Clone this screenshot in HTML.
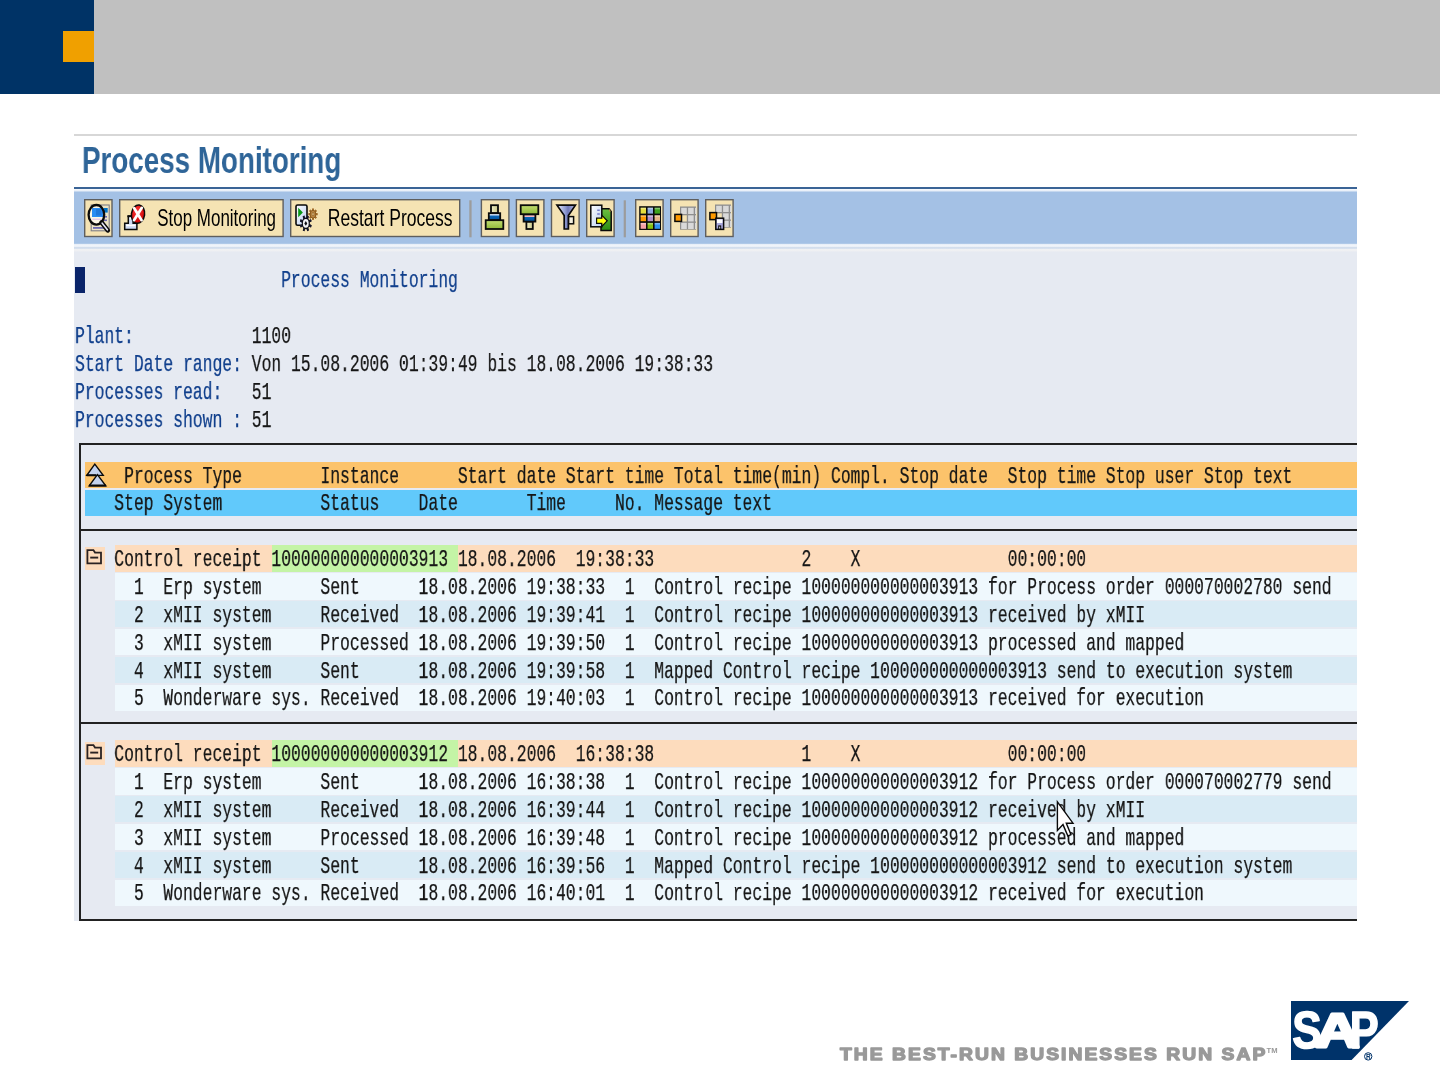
<!DOCTYPE html>
<html><head><meta charset="utf-8"><title>Process Monitoring</title>
<style>
html,body{margin:0;padding:0;background:#fff;}
body{width:1440px;height:1065px;position:relative;overflow:hidden;font-family:"Liberation Sans",sans-serif;}
.abs{position:absolute;}
.ln{position:absolute;left:75.20px;height:28px;line-height:28px;font-family:"Liberation Mono",monospace;font-size:24px;white-space:pre;color:#161616;transform-origin:0 0;transform:scaleX(0.68163);-webkit-text-stroke:0.25px currentColor;will-change:transform;}
.ln .b{color:#103f8c;}
.bg{position:absolute;height:26.3px;}
</style></head><body>

<div class="abs" style="left:94px;top:0;width:1346px;height:94px;background:#c0c0c0"></div>
<div class="abs" style="left:0;top:0;width:94px;height:94px;background:#003366"></div>
<div class="abs" style="left:63px;top:31px;width:31px;height:31px;background:#f0a000"></div>
<div class="abs" id="clip" style="left:0;top:0;width:1357px;height:1065px;overflow:hidden">
<div class="abs" style="left:74px;top:134px;width:1300px;height:126px;background:linear-gradient(to bottom,#ffffff 0.0px,#ffffff 0.1px,#d7d7d7 0.3px,#d7d7d7 1.5px,#ffffff 1.8px,#ffffff 53.0px,#3a6496 53.3px,#3a6496 54.9px,#f6f9fd 55.3px,#eef3fa 56.4px,#a4c1e5 58.4px,#a4c1e5 109.3px,#eef3fa 110.6px,#f2f5fa 112.4px,#d3deed 112.9px,#d3deed 114.4px,#f0f1f3 114.9px,#eff0f3 116.8px,#e6eaf2 118.0px,#e6eaf2 126.0px)"></div>
<div class="abs" style="left:74px;top:259px;width:1300px;height:662.2px;background:#e6eaf2"></div>
<div class="abs" id="title" style="left:81.5px;top:140.9px;font:bold 36.5px/40px 'Liberation Sans',sans-serif;color:#2f6598;white-space:pre;transform-origin:0 0;transform:scaleX(0.761);will-change:transform">Process Monitoring</div>
<svg class="abs" style="left:0;top:0;will-change:transform" width="1440" height="1065" viewBox="0 0 1440 1065">
<defs>
<linearGradient id="gGreen" x1="0" y1="0" x2="0" y2="1"><stop offset="0" stop-color="#c2dc72"/><stop offset="1" stop-color="#8fb838"/></linearGradient>
<linearGradient id="gCream" x1="0" y1="0" x2="1" y2="0"><stop offset="0" stop-color="#f2f0c8"/><stop offset="1" stop-color="#c9c68a"/></linearGradient>
<linearGradient id="gBlue" x1="0" y1="0" x2="0" y2="1"><stop offset="0" stop-color="#e8f0fc"/><stop offset="0.3" stop-color="#cfe0f8"/><stop offset="0.36" stop-color="#0a66b8"/><stop offset="1" stop-color="#00509c"/></linearGradient>
<linearGradient id="gBlueP" x1="0" y1="0" x2="0" y2="1"><stop offset="0" stop-color="#fcc4cc"/><stop offset="0.3" stop-color="#f8b8c0"/><stop offset="0.36" stop-color="#0a66b8"/><stop offset="1" stop-color="#00509c"/></linearGradient>
<linearGradient id="gFun" x1="0" y1="0" x2="1" y2="0"><stop offset="0" stop-color="#e8ecfa"/><stop offset="0.45" stop-color="#8f9bd2"/><stop offset="0.6" stop-color="#6f78b8"/><stop offset="1" stop-color="#b8c0e6"/></linearGradient>
<linearGradient id="gDoc" x1="0" y1="0" x2="1" y2="1"><stop offset="0" stop-color="#ffffff"/><stop offset="1" stop-color="#b9cdf0"/></linearGradient>
<linearGradient id="gGrn2" x1="0" y1="0" x2="0" y2="1"><stop offset="0" stop-color="#6cc040"/><stop offset="1" stop-color="#2a8a12"/></linearGradient>
<radialGradient id="gRed" cx="0.4" cy="0.35" r="0.7"><stop offset="0" stop-color="#ff3a3a"/><stop offset="1" stop-color="#c80000"/></radialGradient>
</defs>
<rect x="84.70" y="199.7" width="27.30" height="36.8" fill="#f5e3b3" stroke="#5e5e5e" stroke-width="1.4"/>
<rect x="119.70" y="199.7" width="163.40" height="36.8" fill="#f5e3b3" stroke="#5e5e5e" stroke-width="1.4"/>
<rect x="290.70" y="199.7" width="169.00" height="36.8" fill="#f5e3b3" stroke="#5e5e5e" stroke-width="1.4"/>
<rect x="481.40" y="199.7" width="27.50" height="36.8" fill="#f5e3b3" stroke="#5e5e5e" stroke-width="1.4"/>
<rect x="516.40" y="199.7" width="27.50" height="36.8" fill="#f5e3b3" stroke="#5e5e5e" stroke-width="1.4"/>
<rect x="551.50" y="199.7" width="27.60" height="36.8" fill="#f5e3b3" stroke="#5e5e5e" stroke-width="1.4"/>
<rect x="586.70" y="199.7" width="27.40" height="36.8" fill="#f5e3b3" stroke="#5e5e5e" stroke-width="1.4"/>
<rect x="635.70" y="199.7" width="27.40" height="36.8" fill="#f5e3b3" stroke="#5e5e5e" stroke-width="1.4"/>
<rect x="670.70" y="199.7" width="27.40" height="36.8" fill="#f5e3b3" stroke="#5e5e5e" stroke-width="1.4"/>
<rect x="705.70" y="199.7" width="27.40" height="36.8" fill="#f5e3b3" stroke="#5e5e5e" stroke-width="1.4"/>
<rect x="469.3" y="200.3" width="2.3" height="37" fill="#9c9c9c"/>
<rect x="623.7" y="200.3" width="2.2" height="37" fill="#9c9c9c"/>
<text x="157.3" y="226" font-family="Liberation Sans, sans-serif" font-size="23.6" textLength="118.7" lengthAdjust="spacingAndGlyphs" fill="#000">Stop Monitoring</text>
<text x="327.8" y="226" font-family="Liberation Sans, sans-serif" font-size="23.6" textLength="124.8" lengthAdjust="spacingAndGlyphs" fill="#000">Restart Process</text>
<g>
<rect x="91.2" y="205" width="18" height="25.8" fill="#ece4c6" stroke="#7e7e86" stroke-width="1.1"/>
<rect x="103.3" y="208" width="4.4" height="4.6" fill="#0070c4"/>
<rect x="103.8" y="216" width="3.2" height="1.6" fill="#6a68b0"/><rect x="103.8" y="219.5" width="3.2" height="1.6" fill="#6a68b0"/>
<rect x="93" y="227" width="12" height="1.8" fill="#6a68b0"/>
<ellipse cx="96.4" cy="214.8" rx="7.9" ry="9.9" fill="#fbf6e6"/>
<rect x="92" y="208" width="11.2" height="9" fill="#2a8cf2"/>
<rect x="96" y="209" width="5.5" height="6.5" fill="#1c6fd0" opacity="0.7"/>
<rect x="92.5" y="218.6" width="9" height="1.3" fill="#e6c6e6"/>
<ellipse cx="96.4" cy="214.8" rx="7.8" ry="9.8" fill="none" stroke="#0a0a0a" stroke-width="2.3"/>
<path d="M101.6 222.4 L107.8 230.4" stroke="#0a0a0a" stroke-width="4.6" stroke-linecap="round"/>
<path d="M102.2 223.2 L107.4 229.8" stroke="#e8e8fa" stroke-width="1.6" stroke-linecap="round"/>
</g>
<g>
<path d="M128.3 216 h4.8 v7.2 h3.8 v6.2 h-12.2 v-6.2 h3.6 z" fill="#cdd9f3" stroke="#0a0a0a" stroke-width="1.5" stroke-linejoin="miter"/>
<rect x="126.2" y="224.6" width="9.2" height="1.6" fill="#ffffff"/>
<rect x="127.4" y="215.4" width="6.6" height="1.8" fill="#0a0a0a"/>
<circle cx="130.6" cy="218.4" r="1.1" fill="#ffffff"/>
<ellipse cx="138" cy="214.2" rx="6.6" ry="9.2" fill="url(#gRed)" stroke="#0a0a0a" stroke-width="1.5" transform="rotate(8 138 214.2)"/>
<path d="M134.2 208.2 L141.6 220.2 M141.8 207.8 L134 220.2" stroke="#fff" stroke-width="2.7" stroke-linecap="round"/>
</g>
<g>
<rect x="296" y="205" width="11" height="20.3" rx="1.6" fill="url(#gDoc)" stroke="#0a0a0a" stroke-width="1.6"/>
<path d="M298.2 207.8 L302.9 212.4 L298.2 217.2 z" fill="#0a9a18"/>
<g transform="translate(313 214.2) scale(0.8 1)">
<rect x="-1" y="-5.6" width="2" height="11.2" fill="#a06a28" transform="rotate(0)"/>
<rect x="-1" y="-5.6" width="2" height="11.2" fill="#a06a28" transform="rotate(45)"/>
<rect x="-1" y="-5.6" width="2" height="11.2" fill="#a06a28" transform="rotate(90)"/>
<rect x="-1" y="-5.6" width="2" height="11.2" fill="#a06a28" transform="rotate(135)"/>
<rect x="-1" y="-5.6" width="2" height="11.2" fill="#a06a28" transform="rotate(180)"/>
<rect x="-1" y="-5.6" width="2" height="11.2" fill="#a06a28" transform="rotate(225)"/>
<rect x="-1" y="-5.6" width="2" height="11.2" fill="#a06a28" transform="rotate(270)"/>
<rect x="-1" y="-5.6" width="2" height="11.2" fill="#a06a28" transform="rotate(315)"/>
<ellipse cx="0" cy="0" rx="3.5" ry="4" fill="#b98542" stroke="#7a4c14" stroke-width="0.8"/><rect x="-1.1" y="-1.3" width="2.2" height="2.6" fill="#e9cf9a" stroke="#7a4c14" stroke-width="0.5"/>
</g>
<g transform="translate(305.8 223.4) scale(0.74 1)">
<rect x="-1.15" y="-8" width="2.3" height="16" fill="#16162a" transform="rotate(22)"/>
<rect x="-1.15" y="-8" width="2.3" height="16" fill="#16162a" transform="rotate(67)"/>
<rect x="-1.15" y="-8" width="2.3" height="16" fill="#16162a" transform="rotate(112)"/>
<rect x="-1.15" y="-8" width="2.3" height="16" fill="#16162a" transform="rotate(157)"/>
<rect x="-1.15" y="-8" width="2.3" height="16" fill="#16162a" transform="rotate(202)"/>
<rect x="-1.15" y="-8" width="2.3" height="16" fill="#16162a" transform="rotate(247)"/>
<rect x="-1.15" y="-8" width="2.3" height="16" fill="#16162a" transform="rotate(292)"/>
<rect x="-1.15" y="-8" width="2.3" height="16" fill="#16162a" transform="rotate(337)"/>
<ellipse cx="0" cy="0" rx="5.4" ry="5.9" fill="#101018"/>
<ellipse cx="0" cy="0" rx="3.9" ry="4.4" fill="#f2f2f6"/>
<path d="M0 -2.4 L2 0 L0 2.4 L-2 0 z" fill="#101018"/>
</g>
</g>
<g stroke="#0a0a0a" stroke-width="1.8">
<rect x="491" y="205.2" width="7" height="8" fill="url(#gCream)"/>
<rect x="488.8" y="213.2" width="11.4" height="7" fill="url(#gBlue)"/>
<rect x="485.7" y="220.2" width="17.6" height="8.8" fill="url(#gGreen)"/>
</g>
<g stroke="#0a0a0a" stroke-width="1.8">
<rect x="526.4" y="221.6" width="6.4" height="7.4" fill="url(#gCream)"/>
<rect x="523.6" y="214.4" width="11.8" height="7.2" fill="url(#gBlueP)"/>
<rect x="520.7" y="205.2" width="17.6" height="9" fill="url(#gGreen)"/>
</g>
<g>
<rect x="568.4" y="216.6" width="5.2" height="7.2" fill="#f4f0e0" stroke="#0a0a0a" stroke-width="1.5"/>
<path d="M557 205.2 L575.4 205.2 L568.4 215.6 L568.4 229 L564.2 229 L564.2 215.6 z" fill="url(#gFun)" stroke="#0a0a0a" stroke-width="1.7" stroke-linejoin="miter"/>
</g>
<g>
<path d="M601 208.8 L609 208.8 L611.2 211.4 L611.2 230.6 L601 230.6 z" fill="url(#gGrn2)" stroke="#0a0a0a" stroke-width="1.5"/>
<path d="M609 208.8 L611.2 211.4 L609 211.4 z" fill="#b89040"/>
<rect x="590.8" y="205.2" width="11" height="21.6" fill="url(#gDoc)" stroke="#0a0a0a" stroke-width="1.5"/>
<rect x="597.2" y="209.6" width="2.6" height="1.2" fill="#5a62c0"/><rect x="597.2" y="213.4" width="2.6" height="1.2" fill="#5a62c0"/>
<path d="M596.6 218.2 L601.8 218.2 L601.8 215.2 L607.2 220.8 L601.8 226.4 L601.8 223.4 L596.6 223.4 z" fill="#ffff10" stroke="#0a0a0a" stroke-width="1.2" stroke-linejoin="miter"/>
</g>
<g>
<rect x="639.2" y="206.2" width="21.8" height="23.8" fill="#0a0a0a"/>
<rect x="640.60" y="207.70" width="5.4" height="5.9" fill="#e6de3c"/>
<rect x="640.60" y="207.70" width="5.4" height="1.6" fill="#fff" opacity="0.35"/>
<rect x="647.60" y="207.70" width="5.4" height="5.9" fill="#8aa8dc"/>
<rect x="647.60" y="207.70" width="5.4" height="1.6" fill="#fff" opacity="0.35"/>
<rect x="654.60" y="207.70" width="5.4" height="5.9" fill="#3ea21e"/>
<rect x="654.60" y="207.70" width="5.4" height="1.6" fill="#fff" opacity="0.35"/>
<rect x="640.60" y="215.30" width="5.4" height="5.9" fill="#ff9a00"/>
<rect x="640.60" y="215.30" width="5.4" height="1.6" fill="#fff" opacity="0.35"/>
<rect x="647.60" y="215.30" width="5.4" height="5.9" fill="#b08fc8"/>
<rect x="647.60" y="215.30" width="5.4" height="1.6" fill="#fff" opacity="0.35"/>
<rect x="654.60" y="215.30" width="5.4" height="5.9" fill="#e6b688"/>
<rect x="654.60" y="215.30" width="5.4" height="1.6" fill="#fff" opacity="0.35"/>
<rect x="640.60" y="222.90" width="5.4" height="5.9" fill="#f7a0a4"/>
<rect x="640.60" y="222.90" width="5.4" height="1.6" fill="#fff" opacity="0.35"/>
<rect x="647.60" y="222.90" width="5.4" height="5.9" fill="#86c010"/>
<rect x="647.60" y="222.90" width="5.4" height="1.6" fill="#fff" opacity="0.35"/>
<rect x="654.60" y="222.90" width="5.4" height="5.9" fill="#2e90f2"/>
<rect x="654.60" y="222.90" width="5.4" height="1.6" fill="#fff" opacity="0.35"/>
</g>
<rect x="680.00" y="206.50" width="16" height="23.2" fill="#8e8e8e"/>
<rect x="681.20" y="207.80" width="5.60" height="6.2" fill="#d9d9d9"/>
<rect x="688.10" y="207.80" width="5.60" height="6.2" fill="#d9d9d9"/>
<rect x="695.00" y="207.80" width="1.60" height="6.2" fill="#d9d9d9"/>
<rect x="681.20" y="215.30" width="5.60" height="6.2" fill="#f5e3b3"/>
<rect x="688.10" y="215.30" width="5.60" height="6.2" fill="#d9d9d9"/>
<rect x="695.00" y="215.30" width="1.60" height="6.2" fill="#d9d9d9"/>
<rect x="681.20" y="222.80" width="5.60" height="6.2" fill="#d9d9d9"/>
<rect x="688.10" y="222.80" width="5.60" height="6.2" fill="#d9d9d9"/>
<rect x="695.00" y="222.80" width="1.60" height="6.2" fill="#d9d9d9"/>
<rect x="680" y="214.6" width="1.4" height="6.6" fill="#f5e3b3"/>
<rect x="674.9" y="214.4" width="6.6" height="7" fill="#ff9a00" stroke="#0a0a0a" stroke-width="1.5"/>
<rect x="715.00" y="204.50" width="16" height="23.2" fill="#8e8e8e"/>
<rect x="716.20" y="205.80" width="5.60" height="6.2" fill="#d9d9d9"/>
<rect x="723.10" y="205.80" width="5.60" height="6.2" fill="#d9d9d9"/>
<rect x="730.00" y="205.80" width="1.60" height="6.2" fill="#d9d9d9"/>
<rect x="716.20" y="213.30" width="5.60" height="6.2" fill="#f5e3b3"/>
<rect x="723.10" y="213.30" width="5.60" height="6.2" fill="#d9d9d9"/>
<rect x="730.00" y="213.30" width="1.60" height="6.2" fill="#d9d9d9"/>
<rect x="716.20" y="220.80" width="5.60" height="6.2" fill="#d9d9d9"/>
<rect x="723.10" y="220.80" width="5.60" height="6.2" fill="#d9d9d9"/>
<rect x="730.00" y="220.80" width="1.60" height="6.2" fill="#d9d9d9"/>
<rect x="709.9" y="212.6" width="6.6" height="7" fill="#ff9a00" stroke="#0a0a0a" stroke-width="1.5"/>
<rect x="715.8" y="218.2" width="7.8" height="11.2" fill="#aaa8dc" stroke="#0a0a0a" stroke-width="1.5"/>
<rect x="717" y="219.4" width="5.4" height="3.6" fill="#ffffff"/>
<rect x="718.2" y="225.4" width="3" height="3.6" fill="#0a0a0a"/><rect x="719.3" y="226.6" width="0.9" height="2" fill="#fff"/>
</svg>
<div class="abs" style="left:75px;top:267px;width:10px;height:25.5px;background:#0a246a"></div>
<div class="abs" style="left:79px;top:443px;width:1300px;height:473.9px;border:2px solid #222;border-bottom-width:2.3px;border-right:none"></div>
<div class="abs" style="left:79px;top:528.5px;width:1300px;height:2px;background:#222"></div>
<div class="abs" style="left:79px;top:721.5px;width:1300px;height:2px;background:#222"></div>
<div class="ln" style="top:267.48px"><span class="b">                     Process Monitoring</span></div>
<div class="ln" style="top:323.20px"><span class="b">Plant:</span>            1100</div>
<div class="ln" style="top:351.06px"><span class="b">Start Date range:</span> Von 15.08.2006 01:39:49 bis 18.08.2006 19:38:33</div>
<div class="ln" style="top:378.92px"><span class="b">Processes read:</span>   51</div>
<div class="ln" style="top:406.78px"><span class="b">Processes shown :</span> 51</div>
<div class="bg" style="left:85.0px;top:461.80px;width:1400.0px;background:#fcc36b"></div>
<div class="bg" style="left:85.0px;top:489.66px;width:1400.0px;background:#61c9fb"></div>
<div class="ln" style="top:462.50px">     Process Type        Instance      Start date Start time Total time(min) Compl. Stop date  Stop time Stop user Stop text</div>
<div class="ln" style="top:490.36px">    Step System          Status    Date       Time     No. Message text</div>
<div class="abs" style="left:85.0px;top:546.98px;width:19.6px;height:22.6px;background:#fddcbd"></div>
<div class="bg" style="left:114.5px;top:545.38px;width:1400.0px;background:#fddcbd"></div>
<div class="bg" style="left:271.5px;top:545.38px;width:186.5px;background:#c4f4a6"></div>
<div class="ln" style="top:546.08px">    Control receipt 100000000000003913 18.08.2006  19:38:33               2    X               00:00:00</div>
<div class="bg" style="left:114.5px;top:573.24px;width:1400.0px;background:#eff8fd"></div>
<div class="ln" style="top:573.94px">      1  Erp system      Sent      18.08.2006 19:38:33  1  Control recipe 100000000000003913 for Process order 000070002780 send</div>
<div class="bg" style="left:114.5px;top:601.10px;width:1400.0px;background:#d9ebf5"></div>
<div class="ln" style="top:601.80px">      2  xMII system     Received  18.08.2006 19:39:41  1  Control recipe 100000000000003913 received by xMII</div>
<div class="bg" style="left:114.5px;top:628.96px;width:1400.0px;background:#eff8fd"></div>
<div class="ln" style="top:629.66px">      3  xMII system     Processed 18.08.2006 19:39:50  1  Control recipe 100000000000003913 processed and mapped</div>
<div class="bg" style="left:114.5px;top:656.82px;width:1400.0px;background:#d9ebf5"></div>
<div class="ln" style="top:657.52px">      4  xMII system     Sent      18.08.2006 19:39:58  1  Mapped Control recipe 100000000000003913 send to execution system</div>
<div class="bg" style="left:114.5px;top:684.68px;width:1400.0px;background:#eff8fd"></div>
<div class="ln" style="top:685.38px">      5  Wonderware sys. Received  18.08.2006 19:40:03  1  Control recipe 100000000000003913 received for execution</div>
<div class="abs" style="left:85.0px;top:742.00px;width:19.6px;height:22.6px;background:#fddcbd"></div>
<div class="bg" style="left:114.5px;top:740.40px;width:1400.0px;background:#fddcbd"></div>
<div class="bg" style="left:271.5px;top:740.40px;width:186.5px;background:#c4f4a6"></div>
<div class="ln" style="top:741.10px">    Control receipt 100000000000003912 18.08.2006  16:38:38               1    X               00:00:00</div>
<div class="bg" style="left:114.5px;top:768.26px;width:1400.0px;background:#eff8fd"></div>
<div class="ln" style="top:768.96px">      1  Erp system      Sent      18.08.2006 16:38:38  1  Control recipe 100000000000003912 for Process order 000070002779 send</div>
<div class="bg" style="left:114.5px;top:796.12px;width:1400.0px;background:#d9ebf5"></div>
<div class="ln" style="top:796.82px">      2  xMII system     Received  18.08.2006 16:39:44  1  Control recipe 100000000000003912 received by xMII</div>
<div class="bg" style="left:114.5px;top:823.98px;width:1400.0px;background:#eff8fd"></div>
<div class="ln" style="top:824.68px">      3  xMII system     Processed 18.08.2006 16:39:48  1  Control recipe 100000000000003912 processed and mapped</div>
<div class="bg" style="left:114.5px;top:851.84px;width:1400.0px;background:#d9ebf5"></div>
<div class="ln" style="top:852.54px">      4  xMII system     Sent      18.08.2006 16:39:56  1  Mapped Control recipe 100000000000003912 send to execution system</div>
<div class="bg" style="left:114.5px;top:879.70px;width:1400.0px;background:#eff8fd"></div>
<div class="ln" style="top:880.40px">      5  Wonderware sys. Received  18.08.2006 16:40:01  1  Control recipe 100000000000003912 received for execution</div>
<svg class="abs" style="left:0;top:440px;will-change:transform" width="200" height="400" viewBox="0 440 200 400">
<path d="M94.8 464.2 L103.2 475.4 L86.8 475.4 z" fill="#c4d2ee" stroke="#0a0a0a" stroke-width="1.4" stroke-linejoin="miter"/>
<path d="M97.4 474.6 L105.8 485.8 L89.2 485.8 z" fill="#c4d2ee" stroke="#0a0a0a" stroke-width="1.4" stroke-linejoin="miter"/>
<path d="M86.6 475.2 L96 475.2 M89 485.6 L106 485.6" stroke="#0a0a0a" stroke-width="2"/>
<path d="M87.4 563.3 L87.4 550.1 L93.4 550.1 L95 552.6 L101 552.6 L101 563.3 z" fill="none" stroke="#2a2222" stroke-width="1.8" stroke-linejoin="miter"/>
<path d="M90.2 557.6 L98.2 557.6" stroke="#2a2222" stroke-width="1.9"/>
<path d="M87.4 758.3 L87.4 745.1 L93.4 745.1 L95 747.6 L101 747.6 L101 758.3 z" fill="none" stroke="#2a2222" stroke-width="1.8" stroke-linejoin="miter"/>
<path d="M90.2 752.6 L98.2 752.6" stroke="#2a2222" stroke-width="1.9"/>
</svg>
</div>
<svg class="abs" style="left:1050px;top:794px" width="32" height="50" viewBox="1050 794 32 50"><path d="M1057.4 801.8 L1057.4 830.4 L1063 824.6 L1067.9 836 L1071 834.7 L1066.3 823.2 L1073 823.2 z" fill="#fff" stroke="#0a0a0a" stroke-width="1.4" stroke-linejoin="miter"/></svg>
<svg class="abs" style="left:820px;top:990px;will-change:transform" width="620" height="75" viewBox="820 990 620 75">
<g transform="translate(840.0 1059.6) scale(1.16 1)"><text x="0" y="0" font-family="Liberation Sans, sans-serif" font-weight="bold" font-size="16.6" textLength="366.6" lengthAdjust="spacing" fill="#999" stroke="#999" stroke-width="1.3" stroke-linejoin="round">THE BEST-RUN BUSINESSES RUN SAP</text></g>
<text x="1266.5" y="1052.6" font-family="Liberation Sans, sans-serif" font-weight="bold" font-size="7.2" textLength="11" lengthAdjust="spacingAndGlyphs" fill="#999">TM</text>
<path d="M1291 1001 L1409 1001 L1351.6 1060 L1291 1060 z" fill="#00336a"/>
<text transform="translate(1292.20 1048.1) scale(0.867 1)" font-family="Liberation Sans, sans-serif" font-weight="bold" font-size="51.0" fill="#fff" stroke="#fff" stroke-width="1.5" stroke-linejoin="round">S</text>
<text transform="translate(1315.16 1047.2) scale(1.260 1)" font-family="Liberation Sans, sans-serif" font-weight="bold" font-size="48.7" fill="#fff" stroke="#fff" stroke-width="3.0" stroke-linejoin="round">A</text>
<text transform="translate(1349.85 1048.1) scale(0.850 1)" font-family="Liberation Sans, sans-serif" font-weight="bold" font-size="51.0" fill="#fff" stroke="#fff" stroke-width="1.5" stroke-linejoin="round">P</text>
<circle cx="1368.2" cy="1056.4" r="3.7" fill="none" stroke="#00336a" stroke-width="1"/>
<text x="1366.1" y="1058.8" font-family="Liberation Sans, sans-serif" font-weight="bold" font-size="6.5" fill="#00336a">R</text>
</svg>
</body></html>
